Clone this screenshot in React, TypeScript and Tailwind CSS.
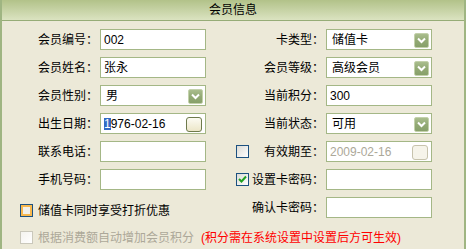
import type {ReactNode} from "react";

const font = {fontFamily: '"Liberation Sans", "Noto Sans CJK SC", sans-serif'}

function DropButton() {
    return (
        <span className="absolute right-[2px] top-[3px] w-[15px] h-[15px] rounded-[2px] border border-[#c3d1ab] bg-gradient-to-b from-[#a9bd8d] via-[#93aa75] to-[#87a06a] flex items-center justify-center">
            <svg width="9" height="7" viewBox="0 0 9 7">
                <path d="M1 1.5 L4.5 5 L8 1.5" fill="none" stroke="#ffffff" strokeWidth="2"/>
            </svg>
        </span>
    )
}

function DateButton({disabled}: {disabled?: boolean}) {
    return (
        <span className={`absolute right-[3px] top-[3px] w-[16px] h-[15px] rounded-[3px] border 
            ${disabled ? 'border-[#c7c3ad] bg-[#f6f4ea]' : 'border-[#6e7a4c] bg-gradient-to-b from-[#fcfbf3] to-[#ece6c8]'}`}/>
    )
}

function Box({children, disabled, select, date}: {children?: ReactNode, disabled?: boolean, select?: boolean, date?: boolean}) {
    return (
        <div className={`relative w-[106px] h-[21px] border border-[#a4b786] flex items-center text-[12px] leading-none
            ${select ? 'pl-[5px]' : 'pl-[3px]'} ${disabled ? 'bg-white text-[#aca899]' : 'bg-white text-black'}`}>
            {children}
            {select && <DropButton/>}
            {date && <DateButton disabled={disabled}/>}
        </div>
    )
}

function Row({label, w, children, left}: {label: string, w: string, children: ReactNode, left?: ReactNode}) {
    return (
        <div className="flex items-center gap-[2px] h-[21px]">
            <div className={`${w} flex items-center justify-between text-[12px] text-black`}>
                <span>{left}</span>
                <span className="whitespace-nowrap">{label}</span>
            </div>
            {children}
        </div>
    )
}

function Check({kind}: {kind: 'plain' | 'hot' | 'checked' | 'off'}) {
    if (kind === 'off') {
        return <span className="w-[13px] h-[13px] border border-[#cac8bb] bg-gradient-to-br from-[#f4f3ee] to-[#ffffff] shrink-0"/>
    }
    return (
        <span className="w-[13px] h-[13px] border border-[#1c5180] bg-gradient-to-br from-[#dcdcd6] to-[#ffffff] shrink-0 flex items-center justify-center">
            {kind === 'hot' && <span className="w-[11px] h-[11px] border-2 border-[#f8b84e] bg-[#f3f1ea]"/>}
            {kind === 'checked' && (
                <svg width="9" height="9" viewBox="0 0 9 9">
                    <path d="M1 4 L3.5 6.5 L8 1.5" fill="none" stroke="#21a121" strokeWidth="2"/>
                </svg>
            )}
        </span>
    )
}

export default function App() {
    return (
        <div style={font} className="w-[466px] h-[249px] bg-[#ece9d8] border-x-2 border-[#9fb582] overflow-hidden">
            <div className="h-[21px] border-b border-[#96ac77] bg-gradient-to-b from-[#b2c289] to-[#dbe3c1] flex items-center justify-center text-[12px] text-black">
                会员信息
            </div>

            <div className="flex pt-[8px]">
                <div className="w-[231px] flex flex-col gap-[7px]">
                    <Row label="会员编号：" w="w-[96px]"><Box>002</Box></Row>
                    <Row label="会员姓名：" w="w-[96px]"><Box>张永</Box></Row>
                    <Row label="会员性别：" w="w-[96px]"><Box select>男</Box></Row>
                    <Row label="出生日期：" w="w-[96px]">
                        <Box date>
                            <span className="bg-[#316ac5] text-white">1</span>976-02-16
                        </Box>
                    </Row>
                    <Row label="联系电话：" w="w-[96px]"><Box/></Row>
                    <Row label="手机号码：" w="w-[96px]"><Box/></Row>
                    <div className="mt-[7px] pl-[18px] flex items-center gap-[5px] h-[13px] text-[12px] text-black whitespace-nowrap">
                        <Check kind="hot"/>
                        储值卡同时享受打折优惠
                    </div>
                </div>

                <div className="flex flex-col gap-[7px]">
                    <Row label="卡类型：" w="w-[91px]"><Box select>储值卡</Box></Row>
                    <Row label="会员等级：" w="w-[91px]"><Box select>高级会员</Box></Row>
                    <Row label="当前积分：" w="w-[91px]"><Box>300</Box></Row>
                    <Row label="当前状态：" w="w-[91px]"><Box select>可用</Box></Row>
                    <Row label="有效期至：" w="w-[91px]" left={<span className="pl-[3px] flex"><Check kind="plain"/></span>}>
                        <Box disabled date>2009-02-16</Box>
                    </Row>
                    <Row label="设置卡密码：" w="w-[91px]" left={<span className="pl-[3px] flex"><Check kind="checked"/></span>}>
                        <Box/>
                    </Row>
                    <Row label="确认卡密码：" w="w-[91px]"><Box/></Row>
                </div>
            </div>

            <div className="mt-[13px] pl-[18px] flex items-center gap-[5px] h-[13px] text-[12px] whitespace-nowrap">
                <Check kind="off"/>
                <span className="text-[#aca899]">根据消费额自动增加会员积分</span>
                <span className="text-[#ff0000] ml-[2px]">(积分需在系统设置中设置后方可生效)</span>
            </div>
        </div>
    )
}
